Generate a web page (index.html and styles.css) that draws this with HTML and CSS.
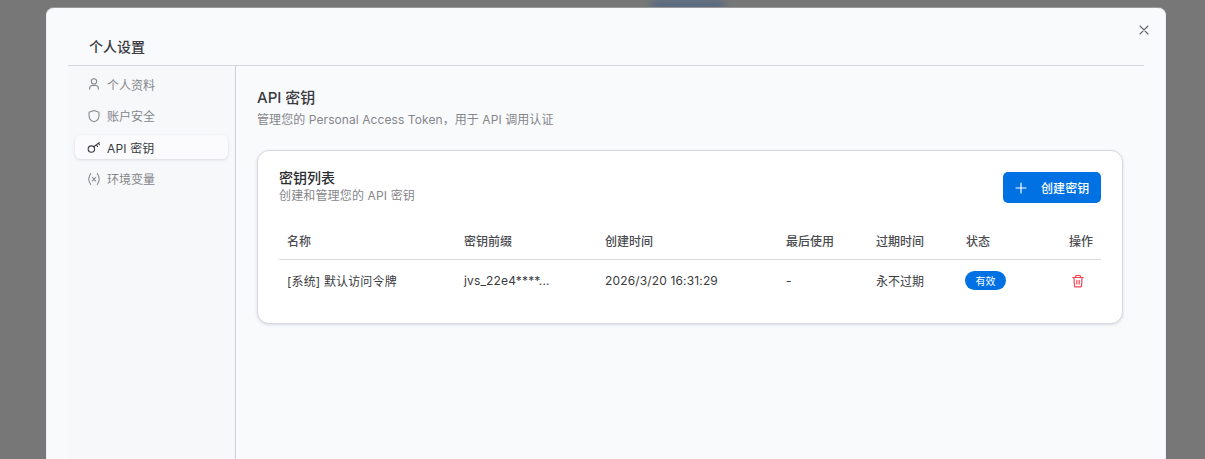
FILE: index.html
```html
<!DOCTYPE html>
<html lang="zh-CN">
<head>
<meta charset="utf-8">
<title>个人设置</title>
<link rel="stylesheet" href="styles.css">
</head>
<body>
<div class="glow"></div>
<div class="modal">
  <button class="close" aria-label="关闭">
    <svg width="16" height="16" viewBox="0 0 16 16" fill="none" stroke="currentColor" stroke-width="1.1" stroke-linecap="round"><path d="M4 4l8 8M12 4l-8 8"/></svg>
  </button>
  <header class="modal-head"><h2 class="modal-title">个人设置</h2></header>
  <div class="modal-body">
    <nav class="side">
      <a class="side-item">
        <svg class="side-icon" viewBox="0 0 24 24" fill="none" stroke="currentColor" stroke-width="1.800" stroke-linecap="round" stroke-linejoin="round"><circle cx="12" cy="7.500" r="4.500"/><path d="M4.500 21v-1.500a5 5 0 0 1 5-5h5a5 5 0 0 1 5 5V21"/></svg>
        <span>个人资料</span>
      </a>
      <a class="side-item">
        <svg class="side-icon" viewBox="0 0 24 24" fill="none" stroke="currentColor" stroke-width="1.800" stroke-linecap="round" stroke-linejoin="round"><path d="M12 2.500l8.500 3v7c0 5-3.800 8-8.500 9.500-4.700-1.500-8.500-4.500-8.500-9.500v-7z"/></svg>
        <span>账户安全</span>
      </a>
      <a class="side-item active">
        <svg class="side-icon" viewBox="0 0 24 24" fill="none" stroke="currentColor" stroke-width="1.900" stroke-linecap="round" stroke-linejoin="round"><circle cx="7.500" cy="15.500" r="5.500"/><path d="M11.500 11.500L21 4.500M16.500 8l1.500 3M20 5.500l1.500 2.500"/></svg>
        <span class="wide">API 密钥</span>
      </a>
      <a class="side-item">
        <svg class="side-icon" viewBox="0 0 24 24" fill="none" stroke="currentColor" stroke-width="1.800" stroke-linecap="round" stroke-linejoin="round"><path d="M6.500 2.500C4 6 3 9 3 12s1 6 3.500 9.500M17.500 2.500C20 6 21 9 21 12s-1 6-3.500 9.500M9 9l6 6.500M15 9l-6 6.500"/></svg>
        <span>环境变量</span>
      </a>
    </nav>
    <main class="content">
      <h3 class="page-title">API 密钥</h3>
      <p class="page-sub">管理您的 Personal Access Token，用于 API 调用认证</p>
      <section class="card">
        <div class="card-head">
          <div class="card-text">
            <h4 class="card-title">密钥列表</h4>
            <p class="card-sub">创建和管理您的 API 密钥</p>
          </div>
          <button class="create">
            <svg width="14" height="14" viewBox="0 0 14 14" fill="none" stroke="currentColor" stroke-width="1.200" stroke-linecap="round"><path d="M7 2v10M2 7h10"/></svg>
            <span>创建密钥</span>
          </button>
        </div>
        <table class="table">
          <colgroup>
            <col class="c1"><col class="c2"><col class="c3"><col class="c4"><col class="c5"><col class="c6"><col>
          </colgroup>
          <thead>
            <tr><th>名称</th><th>密钥前缀</th><th>创建时间</th><th>最后使用</th><th>过期时间</th><th>状态</th><th class="right">操作</th></tr>
          </thead>
          <tbody>
            <tr>
              <td class="wide">[系统] 默认访问令牌</td>
              <td class="wide">jvs_22e4****...</td>
              <td class="wide">2026/3/20 16:31:29</td>
              <td>-</td>
              <td>永不过期</td>
              <td><span class="badge">有效</span></td>
              <td class="right">
                <svg class="trash" width="14" height="14" viewBox="0 0 24 24" fill="none" stroke="currentColor" stroke-width="2" stroke-linecap="round" stroke-linejoin="round"><path d="M3 6h18M8 6V3.500a1 1 0 0 1 1-1h6a1 1 0 0 1 1 1V6M5 6l1 15a1 1 0 0 0 1 1h10a1 1 0 0 0 1-1l1-15M10 11v6M14 11v6"/></svg>
              </td>
            </tr>
          </tbody>
        </table>
      </section>
    </main>
  </div>
</div>
</body>
</html>
```

FILE: styles.css
```css
* { box-sizing: border-box; }
html, body { margin: 0; height: 100%; }
body {
  background: #777;
  overflow: hidden;
  padding: 8px 39px 0 46px;
  font-family: Inter, "Noto Sans CJK SC", sans-serif;
  color: #3a3b40;
  position: relative;
}
h2, h3, h4, p { margin: 0; }
.glow {
  position: absolute;
  left: 652px;
  top: 2px;
  width: 72px;
  height: 6px;
  background: #44618a;
  filter: blur(4px);
}
.modal {
  position: relative;
  width: 1120px;
  height: 451px;
  overflow: hidden;
  background: #f9fafc;
  border-radius: 8px 8px 0 0;
  padding: 0 22px;
  box-shadow: 0 -1px 0 #9a9a9c, inset 1px 0 0 #e9eef6, inset -1px 0 0 #e9eef6;
}
.close {
  position: absolute;
  top: 14px;
  right: 14px;
  width: 16px;
  height: 16px;
  padding: 0;
  border: 0;
  background: none;
  color: #66676c;
  display: flex;
}
.modal-head {
  height: 58px;
  border-bottom: 1px solid #d6d8df;
  padding: 29px 0 0 21px;
}
.modal-title { font-size: 14px; line-height: 20px; font-weight: 500; color: #3a3b40; }
.modal-body { display: flex; height: 393px; }
.side {
  width: 168px;
  flex: none;
  background: #f7f8fa;
  border-right: 1px solid #cfd1d8;
  padding: 6px 7px 0;
  display: flex;
  flex-direction: column;
  gap: 7.5px;
}
.side-item {
  display: flex;
  align-items: center;
  gap: 6.5px;
  height: 24px;
  flex: none;
  padding-left: 11.5px;
  font-size: 12px;
  color: #85868b;
  border-radius: 6px;
}
.side-icon { width: 14px; height: 14px; flex: none; }
.side-item.active {
  background: #fbfbfd;
  color: #3a3b40;
  box-shadow: 0 1px 3px rgba(30, 35, 60, .14);
}
.wide { letter-spacing: .15px; }
.content { flex: 1; padding: 22px 21px 0; min-width: 0; }
.page-title { font-size: 15px; line-height: 20px; font-weight: 500; color: #3a3b40; }
.page-sub { font-size: 12px; line-height: 18px; margin-top: 3px; color: #85868b; letter-spacing: .08px; }
.card {
  margin-top: 21px;
  width: 866px;
  height: 174px;
  background: #fff;
  border-radius: 12px;
  border: 1px solid #d6d8df;
  box-shadow: 0 1px 3px rgba(30, 35, 60, .14);
  padding: 21px 21px 0;
}
.card-head { display: flex; justify-content: space-between; align-items: flex-start; height: 31px; }
.card-title { font-size: 14px; line-height: 16px; font-weight: 500; color: #2c2d31; margin-top: -2px; }
.card-sub { font-size: 12px; line-height: 15px; margin-top: 2px; color: #85868b; letter-spacing: .15px; }
.create {
  width: 98px;
  height: 31px;
  background: #0071e3;
  color: #fff;
  border: 0;
  border-radius: 5px;
  padding: 0 0 0 11px;
  display: flex;
  align-items: center;
  gap: 13px;
  font: 500 12px Inter, "Noto Sans CJK SC", sans-serif;
  letter-spacing: .1px;
}
.table {
  width: 100%;
  margin-top: 21px;
  border-collapse: collapse;
  table-layout: fixed;
  font-size: 12px;
  color: #3a3b40;
}
.c1 { width: 177px; }
.c2 { width: 141px; }
.c3 { width: 181px; }
.c4 { width: 90px; }
.c5 { width: 90px; }
.c6 { width: 80px; }
.table th {
  height: 35px;
  padding: 0 8px 2px;
  font-weight: 500;
  text-align: left;
  border-bottom: 1px solid #d6d8df;
  color: #4a4b50;
}
.table .right { text-align: right; }
.table td { height: 42px; padding: 0 8px; }
.badge {
  display: inline-block;
  width: 41px;
  height: 19px;
  line-height: 21px;
  border-radius: 10px;
  background: #0071e3;
  color: #fff;
  font-size: 10px;
  text-align: center;
  margin-left: -1px;
}
.trash { color: #f5404f; vertical-align: middle; margin-right: 8px; }
```
